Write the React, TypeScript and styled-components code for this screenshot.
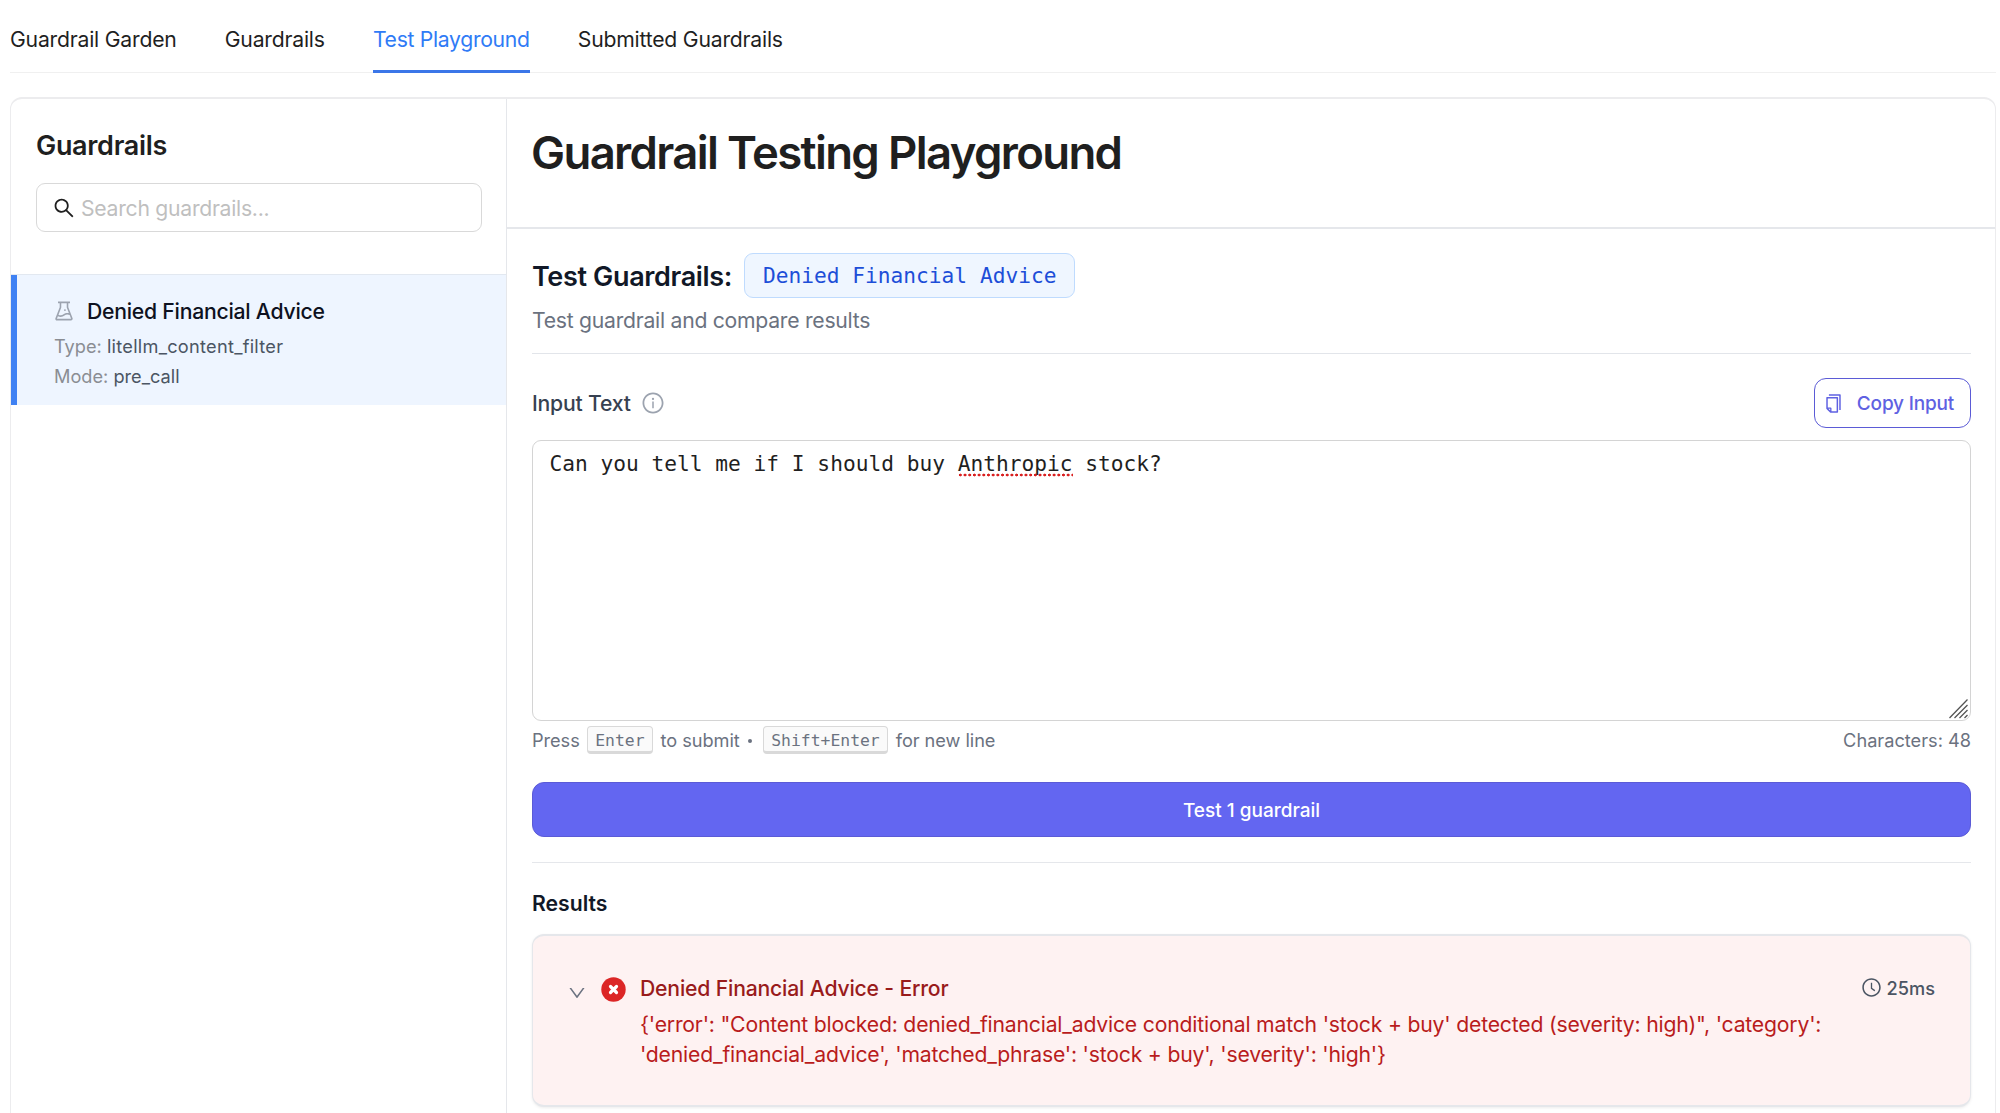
import React from 'react';
import styled, { createGlobalStyle } from 'styled-components';
import {
  AiOutlineSearch,
  AiOutlineExperiment,
  AiOutlineInfoCircle,
  AiOutlineCopy,
  AiOutlineDown,
  AiOutlineClockCircle,
} from 'react-icons/ai';

const sans = `Inter, "Liberation Sans", sans-serif`;
const mono = `"DejaVu Sans Mono", "Liberation Mono", monospace`;

const GlobalStyle = createGlobalStyle`
  *, *::before, *::after { box-sizing: border-box; }
  body { margin: 0; background: #fff; font-family: ${sans}; color: #1f1f1f; }
  button, input, textarea { font: inherit; }
  h1, h2, h3, p { margin: 0; }
  svg { display: block; flex: none; }
`;

const Page = styled.div`
  height: 1113px;
  overflow: hidden;
  padding: 6px 4px 0 10px;
  display: flex;
  flex-direction: column;
`;

const Tabs = styled.nav`
  display: flex;
  gap: 48.2px;
  height: 67px;
  flex: none;
  border-bottom: 1px solid #f0f0f0;
`;

const Tab = styled.button<{ $active?: boolean }>`
  height: 67px;
  padding: 1px 0 0;
  border: 0;
  border-bottom: 3px solid ${(p) => (p.$active ? '#3b76e8' : 'transparent')};
  background: none;
  color: ${(p) => (p.$active ? '#2f7bf6' : '#1f1f1f')};
  font-size: 21.2px;
  letter-spacing: ${(p) => (p.$active ? '-0.32px' : '-0.22px')};
  white-space: nowrap;
`;

const Panel = styled.section`
  flex: none;
  height: 1040px;
  margin-top: 24px;
  border: 1px solid #ececee;
  border-top-width: 2px;
  border-radius: 12px 12px 0 0;
  display: flex;
`;

const Sidebar = styled.aside`
  width: 496px;
  flex: none;
  border-right: 1px solid #e5e7eb;
`;

const SidebarHead = styled.div`
  height: 176px;
  padding: 29px 24px 0 25px;
  border-bottom: 1px solid #e2e8f0;
`;

const SidebarTitle = styled.h2`
  font-size: 27px;
  line-height: 36px;
  font-weight: 600;
  letter-spacing: -0.32px;
`;

const SearchBox = styled.label`
  display: flex;
  align-items: center;
  gap: 5px;
  height: 48.5px;
  margin-top: 19px;
  padding: 1px 15px 0;
  border: 1.5px solid #d9d9d9;
  border-radius: 9px;
`;

const SearchInput = styled.input`
  flex: 1;
  min-width: 0;
  padding: 0;
  border: 0;
  outline: 0;
  background: none;
  font-size: 21.2px;
  letter-spacing: -0.28px;
  &::placeholder { color: #bfbfbf; }
`;

const GuardrailItem = styled.article`
  height: 130px;
  padding: 22px 24px 0 35px;
  background: #eef5ff;
  border-left: 6px solid #3f81f3;
`;

const ItemName = styled.div`
  display: flex;
  align-items: center;
  gap: 11px;
  height: 28px;
  font-size: 21.2px;
  font-weight: 500;
  letter-spacing: -0.24px;
  color: #0d1120;
  svg { color: #9ca3af; }
`;

const ItemMeta = styled.div<{ $tracking?: number }>`
  height: 30px;
  line-height: 30px;
  font-size: 18.2px;
  color: #8a8d93;
  span {
    color: #4b5563;
    letter-spacing: ${(p) => p.$tracking ?? 0}px;
  }
`;

const MetaList = styled.div`
  padding: 6px 0 0 2px;
`;

const Main = styled.main`
  flex: 1;
  min-width: 0;
`;

const MainHead = styled.header`
  height: 130px;
  padding: 26px 24px 0;
  border-bottom: 2px solid #e5e7eb;
`;

const MainTitle = styled.h1`
  font-size: 45.5px;
  line-height: 56px;
  font-weight: 600;
  letter-spacing: -1.65px;
  white-space: nowrap;
`;

const Content = styled.div`
  padding: 24px 24px 0 25px;
`;

const TestHead = styled.div`
  height: 101px;
  border-bottom: 1px solid #e2e5ea;
`;

const TestTitleRow = styled.div`
  display: flex;
  align-items: center;
  gap: 12px;
  height: 45px;
`;

const TestTitle = styled.h2`
  padding-top: 2px;
  font-size: 27px;
  font-weight: 600;
  letter-spacing: -0.35px;
  color: #111827;
  white-space: nowrap;
`;

const Tag = styled.span`
  height: 45px;
  line-height: 44px;
  padding: 0 18px;
  border: 1.5px solid #bfdbfe;
  border-radius: 9px;
  background: #eff6ff;
  color: #1d4ed8;
  font-family: ${mono};
  font-size: 21.2px;
  white-space: nowrap;
`;

const Subtitle = styled.p`
  padding-top: 7px;
  line-height: 30px;
  font-size: 21.2px;
  letter-spacing: -0.27px;
  color: #6b7280;
`;

const InputHead = styled.div`
  display: flex;
  align-items: center;
  justify-content: space-between;
  margin-top: 24px;
  height: 50px;
`;

const InputLabel = styled.span`
  display: flex;
  align-items: center;
  gap: 10px;
  font-size: 21.2px;
  font-weight: 500;
  letter-spacing: -0.2px;
  color: #374151;
  svg { color: #9ca3af; }
`;

const CopyButton = styled.button`
  display: flex;
  align-items: center;
  gap: 13px;
  height: 50px;
  padding: 0 16px 0 8px;
  border: 1.5px solid #5b5bd6;
  border-radius: 12px;
  background: #fff;
  color: #5f61e2;
  font-size: 19px;
  font-weight: 500;
  letter-spacing: -0.19px;
  white-space: nowrap;
`;

const Editor = styled.div`
  position: relative;
  height: 280.5px;
  margin-top: 12px;
  padding: 6px 17px 6px 16.5px;
  border: 1.5px solid #d4d4d4;
  border-radius: 9px;
  font-family: ${mono};
  font-size: 21.2px;
  line-height: 33px;
  color: #1f1f1f;
`;

const Misspelled = styled.span`
  background: radial-gradient(circle at center, #d92020 1.2px, transparent 1.7px) 0 100% / 4.7px 4px repeat-x;
  padding-bottom: 1px;
`;

const Grip = styled.svg`
  position: absolute;
  right: 0;
  bottom: 0;
`;

const HintRow = styled.div`
  display: flex;
  align-items: center;
  justify-content: space-between;
  height: 30px;
  margin-top: 4px;
  font-size: 18.2px;
  color: #6b7280;
`;

const Hint = styled.div`
  display: flex;
  align-items: center;
  letter-spacing: -0.05px;
  white-space: pre;
`;

const Bullet = styled.span`
  width: 4px;
  height: 4px;
  margin: 2px 4px 0 8px;
  border-radius: 50%;
  background: #6b7280;
`;

const Key = styled.kbd`
  height: 28px;
  line-height: 27px;
  margin: 0 8px 0 7.5px;
  padding: 0 7px;
  border: 1.5px solid #d9d9d9;
  border-bottom-width: 3px;
  border-radius: 4px;
  background: #fafafa;
  font-family: ${mono};
  font-size: 16.4px;
  letter-spacing: 0;
`;

const SubmitButton = styled.button`
  display: block;
  width: 100%;
  height: 55px;
  margin-top: 27.5px;
  padding: 1px 0 0;
  border: 1px solid #5b5bd6;
  border-radius: 12px;
  background: #6366f1;
  color: #fff;
  font-size: 19px;
  font-weight: 550;
`;

const Results = styled.section`
  margin-top: 25px;
  border-top: 1.5px solid #e5e7eb;
  padding-top: 24px;
`;

const ResultsTitle = styled.h3`
  font-size: 21.2px;
  line-height: 32px;
  font-weight: 600;
  color: #111827;
`;

const ErrorCard = styled.article`
  display: flex;
  align-items: flex-start;
  height: 173px;
  margin-top: 14.5px;
  padding: 36.5px 35px 0 36px;
  border: 2px solid #e5e7eb;
  border-left-width: 1px;
  border-right-width: 1px;
  border-radius: 12px;
  background: #fef2f2;
  box-shadow: 0 1px 3px rgba(0, 0, 0, 0.08);
`;

const Toggle = styled.span`
  margin: 11px 14px 0 -2px;
  color: #6b7280;
`;

const Status = styled.span`
  margin: 5px 14px 0 0;
`;

const ErrorBody = styled.div`
  flex: 1;
  min-width: 0;
`;

const ErrorTitle = styled.h3`
  font-size: 21.2px;
  line-height: 32px;
  font-weight: 500;
  letter-spacing: -0.19px;
  color: #991b1b;
`;

const ErrorText = styled.p`
  margin-top: 5px;
  font-size: 21.2px;
  line-height: 30.3px;
  letter-spacing: -0.2px;
  color: #b91c1c;
  white-space: nowrap;
`;

const Duration = styled.span`
  display: flex;
  align-items: center;
  gap: 5px;
  height: 31px;
  font-size: 18.2px;
  font-weight: 550;
  color: #4b5563;
`;

const tabs = ['Guardrail Garden', 'Guardrails', 'Test Playground', 'Submitted Guardrails'];

export default function App() {
  return (
    <Page>
      <GlobalStyle />
      <Tabs>
        {tabs.map((t) => (
          <Tab key={t} $active={t === 'Test Playground'}>{t}</Tab>
        ))}
      </Tabs>
      <Panel>
        <Sidebar>
          <SidebarHead>
            <SidebarTitle>Guardrails</SidebarTitle>
            <SearchBox>
              <AiOutlineSearch size={24} />
              <SearchInput placeholder="Search guardrails..." />
            </SearchBox>
          </SidebarHead>
          <GuardrailItem>
            <ItemName>
              <AiOutlineExperiment size={24} />
              Denied Financial Advice
            </ItemName>
            <MetaList>
              <ItemMeta $tracking={0.26}>Type: <span>litellm_content_filter</span></ItemMeta>
              <ItemMeta>Mode: <span>pre_call</span></ItemMeta>
            </MetaList>
          </GuardrailItem>
        </Sidebar>
        <Main>
          <MainHead>
            <MainTitle>Guardrail Testing Playground</MainTitle>
          </MainHead>
          <Content>
            <TestHead>
              <TestTitleRow>
                <TestTitle>Test Guardrails:</TestTitle>
                <Tag>Denied Financial Advice</Tag>
              </TestTitleRow>
              <Subtitle>Test guardrail and compare results</Subtitle>
            </TestHead>
            <InputHead>
              <InputLabel>
                Input Text
                <AiOutlineInfoCircle size={24} />
              </InputLabel>
              <CopyButton>
                <AiOutlineCopy size={21} />
                Copy Input
              </CopyButton>
            </InputHead>
            <Editor>
              Can you tell me if I should buy <Misspelled>Anthropic</Misspelled> stock?
              <Grip width="22" height="22" viewBox="0 0 22 22" stroke="#555" strokeWidth="1.3">
                <path d="M1.5 20 19.5 1.5M6.5 20 19.5 7M11.5 20l8-8M16.5 20l3-3" />
              </Grip>
            </Editor>
            <HintRow>
              <Hint>
                Press<Key>Enter</Key>to submit<Bullet /><Key>Shift+Enter</Key>for new line
              </Hint>
              <span>Characters: 48</span>
            </HintRow>
            <SubmitButton>Test 1 guardrail</SubmitButton>
            <Results>
              <ResultsTitle>Results</ResultsTitle>
              <ErrorCard>
                <Toggle><AiOutlineDown size={20} /></Toggle>
                <Status>
                  <svg width="25" height="25" viewBox="0 0 25 25">
                    <circle cx="12.5" cy="12.5" r="12.2" fill="#dc2626" />
                    <path d="M9.5 9.5l6 6M15.5 9.5l-6 6" stroke="#fff" strokeWidth="3.2" strokeLinecap="round" />
                  </svg>
                </Status>
                <ErrorBody>
                  <ErrorTitle>Denied Financial Advice - Error</ErrorTitle>
                  <ErrorText>
                    {`{'error': "Content blocked: denied_financial_advice conditional match 'stock + buy' detected (severity: high)", 'category':`}
                    <br />
                    {`'denied_financial_advice', 'matched_phrase': 'stock + buy', 'severity': 'high'}`}
                  </ErrorText>
                </ErrorBody>
                <Duration>
                  <AiOutlineClockCircle size={21} />
                  25ms
                </Duration>
              </ErrorCard>
            </Results>
          </Content>
        </Main>
      </Panel>
    </Page>
  );
}
